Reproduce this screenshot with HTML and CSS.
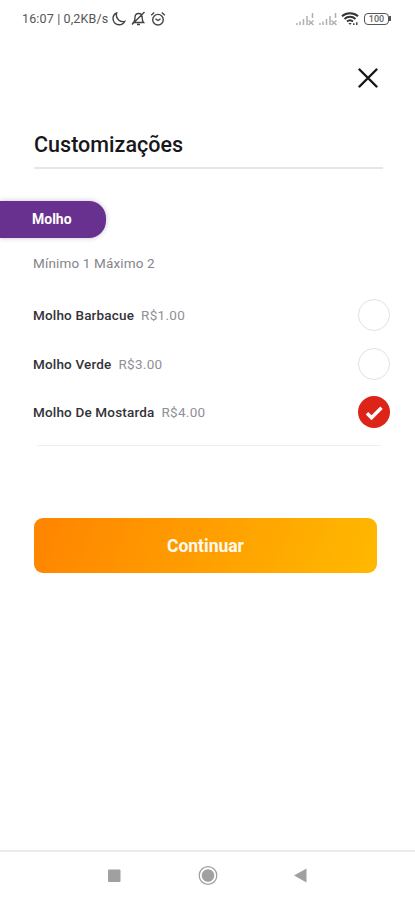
FILE: index.html
```html
<!DOCTYPE html>
<html lang="pt-BR">
<head>
<meta charset="utf-8">
<meta name="viewport" content="width=device-width, initial-scale=1">
<title>Customizações</title>
<link rel="stylesheet" href="styles.css">
</head>
<body>
<div class="screen">
  <header class="status">
    <span class="status-text">16:07 | 0,2KB/s</span>
    <svg class="moon" width="14" height="14" viewBox="0 0 14 14"><path d="M4.600 1C2.300 2 1 4.200 1 6.600c0 3.500 2.700 6.200 6.100 6.200 2.500 0 4.700-1.400 5.700-3.500C8.500 10.700 3.200 7.200 4.600 1Z"/></svg>
    <svg class="bell" width="15" height="15" viewBox="0 0 15 15"><path d="M2.500 11.500h10c-1.300-1.200-1.300-2.500-1.300-5C11.200 4 10 2.500 7.600 2.500S4 4 4 6.500c0 2.500-.2 3.800-1.500 5ZM6 13.500h3M13.500 1 1 13.500"/></svg>
    <svg class="alarm" width="16" height="16" viewBox="0 0 16 16"><circle cx="8" cy="8.700" r="5.300"/><path d="M1.200 4.200 4.200 1.500M14.800 4.200l-3-2.700M5.500 7.800 8 9.500l2.500-1.700"/></svg>
    <div class="status-right">
      <svg class="signal" width="20" height="14" viewBox="0 0 20 14"><path d="M2 11v2M5 9.500V13M8.500 7v6M12 4v9M17.500 1v5M13.500 8.500l5 4.500M18.500 8.500l-5 4.500"/></svg>
      <svg class="signal" width="20" height="14" viewBox="0 0 20 14"><path d="M2 11v2M5 9.500V13M8.500 7v6M12 4v9M17.500 1v5M13.500 8.500l5 4.500M18.500 8.500l-5 4.500"/></svg>
      <svg class="wifi" width="18" height="14" viewBox="0 0 18 14"><path d="M1 4.200c4.500-4 11.500-4 16 0M3.500 6.900c3.200-2.800 7.800-2.800 11 0M6 9.500c1.800-1.500 4.200-1.500 6 0"/><path class="wifi-dot" d="m7.300 11 1.700 2 1.700-2ZM12 11.200h1.500V13H12Zm3-1h1.500V13H15Z"/></svg>
      <span class="battery">100</span>
    </div>
  </header>

  <div class="top">
    <svg class="close" width="20" height="20" viewBox="0 0 20 20"><path d="M1.500 1.500l17 17M18.500 1.500l-17 17"/></svg>
  </div>

  <h1 class="title"><span>Customizações</span></h1>

  <h2 class="tag">Molho</h2>
  <p class="hint">Mínimo 1 Máximo 2</p>

  <ul class="options">
    <li class="option"><span class="name">Molho Barbacue</span><span class="price">R$1.00</span><span class="radio"></span></li>
    <li class="option"><span class="name">Molho Verde</span><span class="price">R$3.00</span><span class="radio"></span></li>
    <li class="option"><span class="name">Molho De Mostarda</span><span class="price">R$4.00</span><span class="radio checked"><svg width="32" height="32" viewBox="0 0 32 32"><path d="m9 17.300 4.500 4.500L23.500 11.800"/></svg></span></li>
  </ul>

  <button class="continue"><span>Continuar</span></button>

  <nav class="nav">
    <svg width="20" height="20" viewBox="0 0 20 20"><rect x="4" y="3.500" width="12.500" height="12.500" rx="1"/></svg>
    <svg width="20" height="20" viewBox="0 0 20 20"><circle cx="10" cy="9.500" r="6.300"/><circle class="ring" cx="10" cy="9.500" r="8.800"/></svg>
    <svg width="20" height="20" viewBox="0 0 20 20"><path d="M3 9.500 15.500 2.500v14Z"/></svg>
  </nav>
</div>
</body>
</html>
```
FILE: styles.css
```css
* { box-sizing: border-box; }
body { margin: 0; background: #fff; font-family: Roboto, "Liberation Sans", sans-serif; color: #1a1a1f; }
h1, h2, p, ul { margin: 0; padding: 0; font-weight: 400; }
svg { display: block; fill: none; flex: none; }
.screen { height: 900px; display: flex; flex-direction: column; }

.status { height: 37px; padding: 0 26px 0 22px; display: flex; align-items: center; }
.status-text { width: 90px; font-size: 12.5px; letter-spacing: .15px; color: #555; white-space: nowrap; }
.moon, .bell, .alarm { stroke: #444; stroke-width: 1.4; }
.bell { margin-left: 5px; }
.alarm { margin-left: 4px; }
.status-right { margin-left: auto; display: flex; align-items: center; }
.signal { stroke: #b0b0b0; stroke-width: 1.5; margin-right: 3px; }
.wifi { stroke: #333; stroke-width: 2; margin-right: 5px; }
.wifi-dot { fill: #444; stroke: none; }
.battery { position: relative; width: 25px; height: 12px; border: 1.5px solid #555; border-radius: 4px; font-size: 9px; line-height: 10px; text-align: center; font-weight: 500; color: #666; }
.battery::after { content: ""; position: absolute; right: -3px; top: 2px; width: 2px; height: 5px; background: #555; }

.top { height: 81px; padding: 31px 37px 0 0; display: flex; justify-content: flex-end; align-items: flex-start; }
.close { stroke: #16161a; stroke-width: 2.4; stroke-linecap: round; }

.title { height: 51px; margin: 0 32px 0 34px; padding-top: 14px; border-bottom: 2px solid #e6e6e6; font-size: 21.5px; line-height: 26px; font-weight: 500; letter-spacing: .03px; color: #18181c; }
.tag { width: 106px; height: 37px; margin-top: 32px; padding-left: 32px; border-radius: 0 17px 17px 0; background: #68308f; box-shadow: 0 0 5px rgba(70, 40, 90, .3); color: #fff; font-size: 14px; line-height: 37px; font-weight: 700; }
.hint { margin: 15px 0 0 33px; font-size: 13.5px; line-height: 20px; letter-spacing: .15px; color: #85858a; }

.options { list-style: none; margin: 18px 34px 0 37px; height: 155px; border-bottom: 1px solid #eee; }
.option { height: 48.5px; margin: 0 -9px 0 -4px; display: flex; align-items: center; font-size: 13.5px; letter-spacing: .17px; }
.name { font-weight: 500; color: #333338; margin-right: 7px; }
.price { color: #909095; letter-spacing: .3px; }
.radio { width: 32px; height: 32px; margin-left: auto; border: 1.5px solid #e2e2e2; border-radius: 50%; }
.radio.checked { border: 0; background: #dc2518; }
.checked path { stroke: #fff; stroke-width: 3.4; }

.continue { width: 343px; height: 55px; margin: 72px 0 0 34px; padding: 0; border: 0; border-radius: 9px; background: linear-gradient(110deg, #ff8400, #ffb900); font: 700 17.5px/54px Roboto, "Liberation Sans", sans-serif; color: #fffaf0; }

.nav { margin-top: auto; height: 50px; border-top: 2px solid #ebebeb; padding: 0 104px; display: flex; justify-content: space-between; align-items: center; }
.nav svg { fill: #a0a0a0; }
.nav .ring { fill: none; stroke: #a0a0a0; stroke-width: 1.3; }
```
